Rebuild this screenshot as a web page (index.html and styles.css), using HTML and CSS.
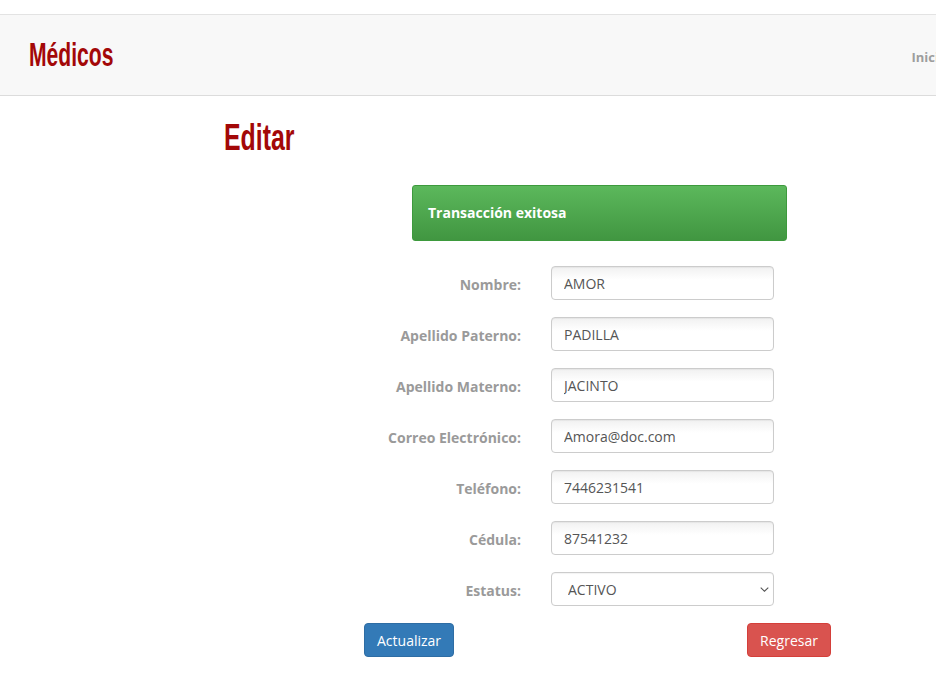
FILE: index.html
```html
<!DOCTYPE html>
<html lang="es">
<head>
<meta charset="utf-8">
<title>Médicos - Editar</title>
<link rel="stylesheet" href="styles.css">
</head>
<body>
<nav class="navbar">
  <a class="brand" href="#">Médicos</a>
  <a class="nav-link" href="#">Inicio</a>
</nav>
<main class="content">
  <h1 class="page-title"><span class="title-text">Editar</span></h1>
  <form class="form">
    <div class="alert">Transacción exitosa</div>
    <div class="row"><label class="label">Nombre:</label><input class="field" type="text" value="AMOR"></div>
    <div class="row"><label class="label">Apellido Paterno:</label><input class="field" type="text" value="PADILLA"></div>
    <div class="row"><label class="label">Apellido Materno:</label><input class="field" type="text" value="JACINTO"></div>
    <div class="row"><label class="label">Correo Electrónico:</label><input class="field" type="text" value="Amora@doc.com"></div>
    <div class="row"><label class="label">Teléfono:</label><input class="field" type="text" value="7446231541"></div>
    <div class="row"><label class="label">Cédula:</label><input class="field" type="text" value="87541232"></div>
    <div class="row"><label class="label">Estatus:</label>
      <div class="select-wrap">
        <select class="select"><option>ACTIVO</option><option>INACTIVO</option></select>
        <svg class="chev" width="9" height="5" viewBox="0 0 9 5"><path d="M0.7 0.7 L4.5 4.2 L8.3 0.7" fill="none" stroke="#555" stroke-width="1.1"/></svg>
      </div>
    </div>
    <div class="actions">
      <button type="button" class="btn btn-primary">Actualizar</button>
      <button type="button" class="btn btn-danger">Regresar</button>
    </div>
  </form>
</main>
</body>
</html>
```
FILE: styles.css
```css
html, body {
  margin: 0;
  padding: 0;
  background: #fff;
  overflow-x: hidden;
}
body {
  font-family: "Open Sans", "Noto Sans", sans-serif;
  font-size: 14px;
  color: #333;
}
.navbar {
  margin-top: 14px;
  height: 80px;
  background: #f8f8f8;
  border-top: 1px solid #e3e3e3;
  border-bottom: 1px solid #dcdcdc;
  display: flex;
  align-items: center;
  justify-content: space-between;
  overflow: hidden;
  box-sizing: content-box;
}
.brand {
  display: inline-block;
  margin-left: 29px;
  font-family: "Liberation Sans", Arial, sans-serif;
  font-weight: bold;
  font-size: 33px;
  color: #a30808;
  text-decoration: none;
  transform: scaleX(0.64);
  transform-origin: left center;
}
.nav-link {
  margin-right: -11px;
  font-size: 13px;
  font-weight: bold;
  color: #9d9d9d;
  text-decoration: none;
  padding-top: 4px;
}
.content {
  padding-top: 22px;
}
.page-title {
  margin: 0 0 27px 224px;
  font-family: "Liberation Sans", Arial, sans-serif;
  font-weight: bold;
  font-size: 36px;
  line-height: 40px;
  color: #a30808;
}
.title-text {
  display: inline-block;
  transform: scaleX(0.69);
  transform-origin: left center;
}
.form {
  margin-left: 364px;
  width: 467px;
}
.alert {
  margin-left: 48px;
  width: 375px;
  box-sizing: border-box;
  padding: 17px 15px;
  line-height: 20px;
  border: 1px solid #3d9a3d;
  border-radius: 3px;
  background: linear-gradient(#5cb85c, #419641);
  color: #fff;
  font-weight: bold;
  font-size: 14px;
  margin-bottom: 25px;
}
.row {
  display: grid;
  grid-template-columns: 157px 223px;
  column-gap: 30px;
  align-items: center;
  margin-bottom: 17px;
}
.label {
  text-align: right;
  font-weight: bold;
  color: #9a9a9a;
  padding-top: 3px;
}
.field, .select {
  box-sizing: border-box;
  width: 223px;
  height: 34px;
  padding: 6px 12px;
  font-family: "Open Sans", "Noto Sans", sans-serif;
  font-size: 14px;
  color: #555;
  border: 1px solid #ccc;
  border-radius: 4px;
  background: linear-gradient(#f1f1f1, #fff 40%);
  box-shadow: inset 0 1px 1px rgba(0,0,0,0.05);
  outline: none;
}
.select-wrap {
  position: relative;
  width: 223px;
}
.select {
  appearance: none;
  -webkit-appearance: none;
  background: #fff;
  padding-left: 16px;
  display: block;
}
.chev {
  position: absolute;
  right: 5px;
  top: 15px;
  pointer-events: none;
}
.actions {
  display: flex;
  justify-content: space-between;
  margin-top: 2px;
}
.btn {
  height: 34px;
  padding: 0 12px;
  font-family: "Open Sans", "Noto Sans", sans-serif;
  font-size: 14px;
  color: #fff;
  border-radius: 4px;
  border: 1px solid;
  cursor: pointer;
}
.btn-primary {
  width: 90px;
  background: #337ab7;
  border-color: #2e6da4;
}
.btn-danger {
  width: 84px;
  background: #d9534f;
  border-color: #d43f3a;
}
```
